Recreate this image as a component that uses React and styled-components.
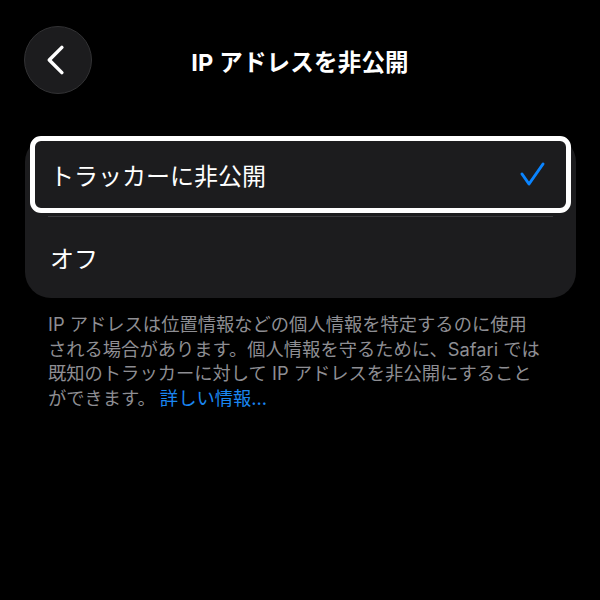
import React from 'react';
import styled, { createGlobalStyle } from 'styled-components';

const GlobalStyle = createGlobalStyle`
  html, body {
    margin: 0;
    padding: 0;
    background: #000;
  }
  body {
    font-family: 'Inter', 'Noto Sans CJK JP', sans-serif;
    -webkit-font-smoothing: antialiased;
  }
  *, *::before, *::after {
    box-sizing: border-box;
  }
`;

const Screen = styled.div`
  width: 600px;
  height: 600px;
  background: #000;
  color: #fff;
  display: flex;
  flex-direction: column;
`;

const Header = styled.header`
  display: grid;
  grid-template-columns: 68px 1fr 68px;
  align-items: center;
  padding: 26px 24px 0;
`;

const BackButton = styled.button`
  width: 68px;
  height: 68px;
  border-radius: 50%;
  background: #1c1c1e;
  border: 1px solid #323234;
  padding: 0;
  display: flex;
  align-items: center;
  justify-content: center;
  cursor: pointer;
`;

const Title = styled.h1`
  margin: 0;
  text-align: center;
  font-size: 23.5px;
  font-weight: 700;
  letter-spacing: 0.2px;
  color: #fff;
  padding-top: 2px;
`;

const Card = styled.section`
  margin: 42px 24px 0 25px;
  background: #1c1c1e;
  border-radius: 26px;
  display: flex;
  flex-direction: column;
`;

const Row = styled.div`
  display: flex;
  align-items: center;
  justify-content: space-between;
  height: ${(p) => (p.$focused ? '77px' : '81px')};
  margin: ${(p) => (p.$focused ? '0 5px' : '0')};
  padding: ${(p) => (p.$focused ? '0 20px 0 15px' : '0 20px 1px 25px')};
  border: ${(p) => (p.$focused ? '5px solid #fff' : 'none')};
  border-radius: ${(p) => (p.$focused ? '11px' : '0')};
  font-size: 24px;
  color: #fff;
`;

const Separator = styled.div`
  height: 1px;
  margin: 3px 23px 0;
  background: #3a3a3d;
`;

const Footnote = styled.p`
  margin: 14px 0 0 48px;
  font-size: 18.3px;
  line-height: 24.6px;
  color: #8e8e93;
  white-space: nowrap;
`;

const Link = styled.a`
  color: #1a86f0;
  text-decoration: none;
  margin-left: 4px;
`;

function Chevron() {
  return (
    <svg width="68" height="68" viewBox="0 0 68 68" fill="none">
      <path
        d="M38 21 L25 34 L38 47"
        stroke="#fff"
        strokeWidth="3.6"
        strokeLinecap="round"
        strokeLinejoin="round"
      />
    </svg>
  );
}

function Check() {
  return (
    <svg width="28" height="28" viewBox="0 0 28 28" fill="none">
      <path
        d="M4 13 L11 23 L25 3"
        stroke="#0a84ff"
        strokeWidth="3"
        strokeLinecap="round"
        strokeLinejoin="round"
      />
    </svg>
  );
}

export default function App() {
  return (
    <Screen>
      <GlobalStyle />
      <Header>
        <BackButton type="button" aria-label="戻る">
          <Chevron />
        </BackButton>
        <Title>IP アドレスを非公開</Title>
        <span />
      </Header>
      <Card>
        <Row $focused>
          <span>トラッカーに非公開</span>
          <Check />
        </Row>
        <Separator />
        <Row>
          <span>オフ</span>
        </Row>
      </Card>
      <Footnote>
        IP アドレスは位置情報などの個人情報を特定するのに使用
        <br />
        される場合があります。個人情報を守るために、Safari では
        <br />
        既知のトラッカーに対して IP アドレスを非公開にすること
        <br />
        ができます。
        <Link href="#">詳しい情報...</Link>
      </Footnote>
    </Screen>
  );
}
